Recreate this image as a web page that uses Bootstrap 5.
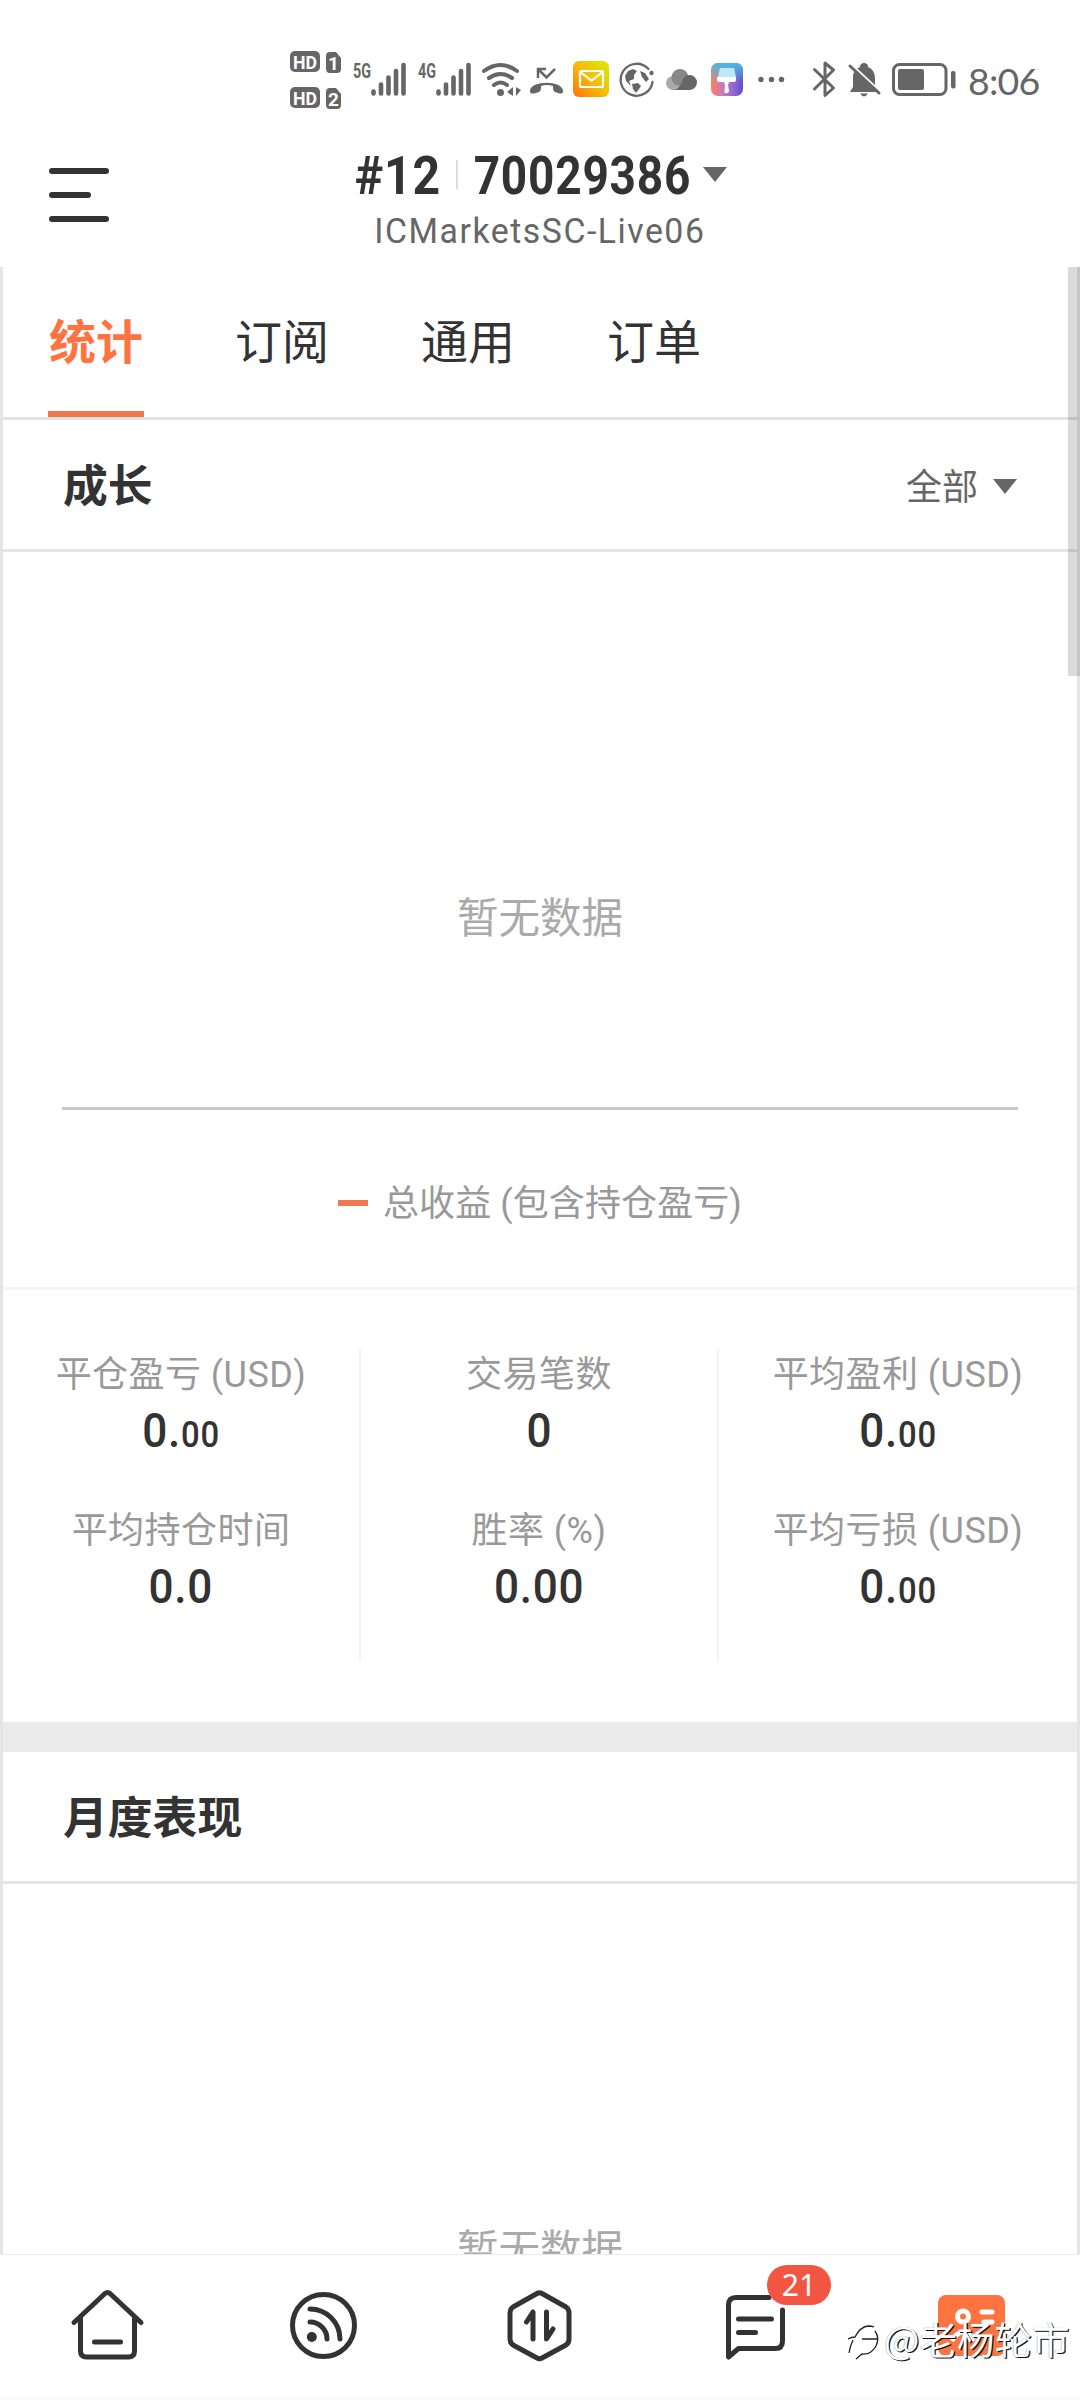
<!DOCTYPE html>
<html lang="zh-CN">
<head>
<meta charset="utf-8">
<meta name="viewport" content="width=device-width, initial-scale=1">
<title>统计</title>
<link href="https://cdn.jsdelivr.net/npm/bootstrap@5.3.0/dist/css/bootstrap.min.css" rel="stylesheet">
<style>
:root{--ink:#333;--soft:#999;--brand:#ff7341}
html,body{height:2400px;overflow:hidden}
body{font-family:Roboto,"Noto Sans CJK SC",sans-serif;color:var(--ink);background:#fff;width:1080px}
.cjk{font-family:"Noto Sans CJK SC",sans-serif}
.status-bar{height:120px;padding:40px 0 0 288px;color:#666}
.status-bar svg{height:80px;flex:none}
.clock{font:400 37.5px/80px Lato,sans-serif;margin:1px 0 0 6px;letter-spacing:-.8px;white-space:nowrap}
.app-head{height:147px}
.menu-btn{width:60px;margin-left:49px;margin-top:48px;height:54px}
.acct{margin-left:-109px}
.acct-line{height:50px;margin-top:29px;line-height:50px}
.din{display:inline-block;white-space:nowrap}
.acct-id{font-size:53.5px;font-weight:700;transform:scaleX(.86);letter-spacing:.9px;margin-top:3px}
.w-no .acct-id{transform:scaleX(.9)}
.w-no{width:88px}.w-id{width:214px}
.bar-v{width:2px;height:29px;background:#ddd;margin:0 18px 0 14px}
.tri{width:0;height:0;border:12px solid transparent;border-top:15px solid #666;border-bottom:0}
.acct-line .tri{margin-left:13px}
.sec-filter .tri{margin-top:4px}
.server{font-size:35.5px;line-height:40px;color:#666;margin-top:12px;letter-spacing:1.6px}
.server .din{transform:scaleX(.952)}
.pane{height:1987px;border-left:3px solid #e5e5e5;border-right:3px solid #e5e5e5;overflow:hidden}
.scroll-thumb{right:0;top:267px;width:12px;height:409px;background:rgba(0,0,0,.14)}
.tabs-row{height:153px;border-bottom:3px solid #e2e2e2;padding-left:45px;gap:90px}
.tab-it{width:96px;font-size:47px;line-height:144px;text-align:center;white-space:nowrap;height:150px}
.tab-it.active{color:var(--brand);font-weight:700;box-shadow:inset 0 -6px #f0774d}
.sec-head{height:132px;border-bottom:3px solid #e5e5e5;padding:0 60px}
.sec-title{font-size:44.8px;font-weight:700;line-height:126px}
.sec-filter{font-size:36px;line-height:129px;color:#666;gap:15px}
.empty-txt{font-size:41.5px;line-height:60px;color:#aaa;padding-top:333px;height:555px}
.axis{height:3px;background:#c9c9c9;margin:0 59px}
.legend-row{height:180px;border-bottom:3px solid #f5f5f5;font-size:36px;color:var(--soft);gap:15px;padding-top:9px}
.legend-row span:last-child{letter-spacing:.1px;padding-top:2px}
.dash{width:30px;height:6px;background:#f2784e}
.stats{height:432px;padding-top:59px}
.stat-col{height:312px;flex:0 0 358px;border-right:2px solid #f2f2f2}
.stat-col:last-child{border:0}
.stat{height:156px;padding-top:2px}
.stat-lb{font-size:36px;line-height:48px;color:var(--soft);white-space:nowrap;letter-spacing:.45px}
.stat-v{font-size:49px;line-height:50px;font-weight:500;margin-top:7px;height:50px}
.stat-v .din{transform:scaleX(.9);letter-spacing:.8px}
.stat-v .dec{font-size:36.5px}
.band{height:30px;background:#ebebeb}
.tabbar{height:146px;border-top:1px solid #ebebeb;border-bottom:3px solid #fafafa}
.tabbar svg{display:block;width:216px;height:142px}
.msg-count{left:119px;top:10px;width:64px;height:40px;border-radius:20px;background:#f25643;font:400 30px/40px "Noto Sans",sans-serif;padding:0}
.wm{left:848px;top:2310px;color:#fff;font-size:37.5px;line-height:48px;text-shadow:1.2px 1.2px .6px #111,-.3px -.3px .8px #999;white-space:nowrap}
.wm svg{margin-top:4px}
</style>
<script src="https://cdn.jsdelivr.net/npm/bootstrap@5.3.0/dist/js/bootstrap.bundle.min.js"></script>
</head>
<body class="position-relative">
<div class="status-bar d-flex">
<svg width="60" viewBox="288 40 60 80" fill="#666"><rect x="290" y="51" width="30" height="21" rx="5"/><rect x="290" y="87" width="30" height="21" rx="5"/><path d="M330 52h6l5 6v11a4 4 0 0 1-4 4h-7a4 4 0 0 1-4-4V56a4 4 0 0 1 4-4zM330 88h6l5 6v11a4 4 0 0 1-4 4h-7a4 4 0 0 1-4-4V92a4 4 0 0 1 4-4z"/><g fill="#fff" font-family="Roboto" font-weight="700" font-size="19" text-anchor="middle"><text x="305" y="68.500" textLength="24" lengthAdjust="spacingAndGlyphs">HD</text><text x="305" y="104.500" textLength="24" lengthAdjust="spacingAndGlyphs">HD</text><text x="333.500" y="69.500">1</text><text x="333.500" y="105.500">2</text></g></svg>
<svg width="130" viewBox="348 40 130 80"><g fill="#666" font-family="Roboto" font-weight="700" font-size="20.500"><text x="353" y="77.500" textLength="18" lengthAdjust="spacingAndGlyphs">5G</text><text x="418" y="77.500" textLength="18" lengthAdjust="spacingAndGlyphs">4G</text></g><path d="M373.500 91.500v2M381 84.500v9M388.500 77.500v16M396 71v22.500M403.500 65v28.500M438.500 91.500v2M446 84.500v9M453.500 77.500v16M461 71v22.500M468.500 65v28.500" stroke="#666" stroke-width="4.600" stroke-linecap="round"/></svg>
<svg width="48" viewBox="478 40 48 80" fill="none" stroke="#666" stroke-width="4" stroke-linecap="round"><path d="M484 71q16.500-12 33 0M489 78q11.500-8 23 0M494 85q6.500-5 13 0"/><circle cx="500.500" cy="92.500" r="3.500" fill="#666" stroke="none"/><path d="M513 87v9l-6-4zM516 87v9l5-6z" fill="#666" stroke="none"/></svg>
<svg width="42" viewBox="526 40 42 80" fill="none" stroke="#666"><path d="M538 78v-9h8M538 69l8.500 8.500L555 69" stroke-width="2.500"/><path d="M530 91c0-11 33-11 33 0 0 3-2 3-5 2-5-1-5-3-5-7q-6-2-12 0c0 4 0 6-5 7-4 1-6 1-6-2z" fill="#666" stroke="none"/></svg>
<svg width="46" viewBox="568 40 46 80"><defs><linearGradient id="mg" x1="1" y1="0" x2="0" y2="1"><stop stop-color="#d5ee00"/><stop offset=".5" stop-color="#f5bd08"/><stop offset="1" stop-color="#ff7209"/></linearGradient></defs><rect x="573" y="61" width="36" height="36" rx="6" fill="url(#mg)"/><g fill="none" stroke="#fff" stroke-width="2.200"><rect x="580" y="71" width="23" height="16" rx="1.500"/><path d="M581 72.500l10.500 8 10.500-8"/></g></svg>
<svg width="46" viewBox="614 40 46 80"><path d="M648.500 69A16 16 0 1 0 652.500 82" fill="none" stroke="#666" stroke-width="2.300" stroke-linecap="round"/><circle cx="651.500" cy="73" r="2.200" fill="#666"/><path d="M628 71l5-2 4 2-3 4v4l-5 2 2 5-5-5-1-5zM632 84l6-1 3 3-2 3-3 4-3-4zM640 71l5 2 4 6-3 3-4-5z" fill="#666"/></svg>
<svg width="44" viewBox="660 40 44 80"><circle cx="673" cy="83" r="7" fill="#aaa"/><circle cx="680" cy="77.500" r="8.500" fill="#888"/><path d="M673 90q6-1 9-8a7.500 7.500 0 1 1 8 8z" fill="#666"/></svg>
<svg width="46" viewBox="704 40 46 80"><defs><linearGradient id="bg1"><stop stop-color="#ff805d"/><stop offset=".45" stop-color="#bd78cd"/><stop offset="1" stop-color="#5c50d5"/></linearGradient><linearGradient id="bg2" x2="0" y2="1"><stop stop-color="#45bde2"/><stop offset=".6" stop-color="#45bde2" stop-opacity="0"/></linearGradient></defs><rect x="711" y="63" width="32" height="33" rx="7" fill="url(#bg1)"/><rect x="711" y="63" width="32" height="33" rx="7" fill="url(#bg2)"/><path d="M720 68h14l2 9h-18z" fill="#bfe8f6"/><path d="M717 77h19v3q0 2-3 2h-4l-1 3 1 6q0 2-2.500 2t-2-2l.500-6-1-3h-4q-3 0-3-2z" fill="#fff"/></svg>
<svg width="50" viewBox="750 40 50 80" fill="#666"><circle cx="761" cy="79.500" r="2.700"/><circle cx="771.500" cy="79.500" r="2.700"/><circle cx="781.500" cy="79.500" r="2.700"/></svg>
<svg width="42" viewBox="800 40 42 80" fill="none" stroke="#666" stroke-width="3" stroke-linecap="round" stroke-linejoin="round"><path d="M814.500 69.500l19 18.500-8.500 7.500V63l8.500 7-19 19"/></svg>
<svg width="44" viewBox="842 40 44 80"><path d="M850 92l3-5V77q0-7 7-10 0-4 4-4t4 4q7 3 7 11v8l4 6zM860 93.500h8q-4 6-8 0z" fill="#666"/><path d="M848 62.500l33 31" stroke="#fff" stroke-width="4"/><path d="M850 66l29 27" stroke="#666" stroke-width="3" stroke-linecap="round"/></svg>
<svg width="76" viewBox="886 40 76 80"><rect x="893.500" y="64.500" width="52.500" height="30" rx="6" fill="none" stroke="#666" stroke-width="3"/><rect x="898" y="69" width="26" height="21" rx="2" fill="#666"/><rect x="951" y="71" width="4.500" height="17.500" rx="2" fill="#666"/></svg>
<div class="clock">8:06</div>
</div>
<header class="app-head d-flex">
<svg class="menu-btn flex-shrink-0" viewBox="0 0 60 54" stroke="#333" stroke-width="6" stroke-linecap="round"><path d="M3 3h54M3 27h36M3 51h54"/></svg>
<div class="acct flex-grow-1 text-center">
<div class="acct-line d-flex align-items-center justify-content-center">
<div class="w-no d-flex justify-content-center"><span class="din acct-id">#12</span></div><span class="bar-v"></span>
<div class="w-id d-flex justify-content-center"><span class="din acct-id">70029386</span></div><span class="tri"></span></div>
<div class="server"><span class="din">ICMarketsSC-Live06</span></div>
</div>
</header>
<main class="pane">
<nav class="tabs-row d-flex cjk">
<div class="tab-it active">统计</div><div class="tab-it">订阅</div><div class="tab-it">通用</div><div class="tab-it">订单</div>
</nav>
<div class="sec-head d-flex justify-content-between cjk"><div class="sec-title">成长</div><div class="sec-filter d-flex align-items-center">全部<span class="tri"></span></div></div>
<div class="empty-txt text-center cjk">暂无数据</div>
<div class="axis"></div>
<div class="legend-row d-flex align-items-center justify-content-center"><span class="dash"></span><span>总收益 (包含持仓盈亏)</span></div>
<section class="stats d-flex text-center">
<div class="stat-col"><div class="stat"><div class="stat-lb">平仓盈亏 (USD)</div><div class="stat-v"><span class="din">0.<span class="dec">00</span></span></div></div><div class="stat"><div class="stat-lb">平均持仓时间</div><div class="stat-v"><span class="din">0.0</span></div></div></div>
<div class="stat-col"><div class="stat"><div class="stat-lb">交易笔数</div><div class="stat-v"><span class="din">0</span></div></div><div class="stat"><div class="stat-lb">胜率 (%)</div><div class="stat-v"><span class="din">0.00</span></div></div></div>
<div class="stat-col"><div class="stat"><div class="stat-lb">平均盈利 (USD)</div><div class="stat-v"><span class="din">0.<span class="dec">00</span></span></div></div><div class="stat"><div class="stat-lb">平均亏损 (USD)</div><div class="stat-v"><span class="din">0.<span class="dec">00</span></span></div></div></div>
</section>
<div class="band"></div>
<div class="sec-head cjk"><div class="sec-title">月度表现</div></div>
<div class="empty-txt text-center cjk">暂无数据</div>
</main>
<div class="scroll-thumb position-absolute"></div>
<nav class="tabbar d-flex">
<svg viewBox="0 2255 216 142" fill="none" stroke="#333" stroke-width="5" stroke-linecap="round" stroke-linejoin="round"><path d="M74 2322.500l31-29q2.500-2 5 0l31 29M80.500 2318v33q0 6 6 6h42q6 0 6-6v-33M94.500 2342h26"/></svg>
<svg viewBox="216 2255 216 142" fill="none" stroke="#333" stroke-width="5" stroke-linecap="round"><circle cx="323.500" cy="2325.500" r="31"/><path d="M310 2309a30 30 0 0 1 30 30M310 2322a17 17 0 0 1 17 17"/><circle cx="311.800" cy="2337" r="5" fill="#333" stroke="none"/></svg>
<svg viewBox="432 2255 216 142" fill="none" stroke="#333" stroke-width="5" stroke-linecap="round" stroke-linejoin="round"><path d="M537 2293.500q2.500-1.500 5 0l24 13.500q3 2 3 6v26q0 4-3 6l-24 13q-2.500 1.500-5 0l-24-13q-3-2-3-6v-26q0-4 3-6z"/><path d="M526.500 2322l6.500-10v27M546.500 2312v27l6.500-10"/></svg>
<div class="position-relative"><svg viewBox="648 2255 216 142" fill="none" stroke="#333" stroke-width="5" stroke-linecap="round" stroke-linejoin="round"><path d="M782.500 2310v31q0 7.500-7 7.500h-37l-10 8.500v-52q0-7.500 7.500-7.500h33M738.500 2319h33M738.500 2332.500h17"/></svg><span class="msg-count badge position-absolute">21</span></div>
<svg viewBox="864 2255 216 142"><rect x="938" y="2295" width="67" height="61" rx="8" fill="#ff7341"/><g fill="none" stroke="#fff" stroke-width="5" stroke-linecap="round"><circle cx="963" cy="2316.500" r="5.500"/><path d="M982 2312h10M984 2322h8M953 2339q10-14 20 0"/></g></svg>
</nav>
<div class="wm position-absolute d-flex align-items-center cjk"><svg width="36" height="52" viewBox="848 2312 36 52" fill="none"><g stroke="#222" stroke-width="1.300"><path d="M848 2337q3-2 7-2 5-10 13-11 4 0 6 1M875 2329q5 7 1 15-5 9-14 8l-6 5M849 2351q1-7 4-13M862 2337h15"/></g></svg><span>@老杨轮市</span></div>
</body>
</html>
